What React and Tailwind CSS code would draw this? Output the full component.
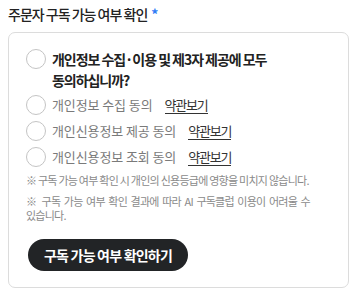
export default function App() {
  const font = { fontFamily: '"Noto Sans CJK KR", "Noto Sans", sans-serif' };
  const Circle = () => (
    <span className="block w-[20px] h-[20px] rounded-full border-[1.5px] border-[#c4c4c4] bg-white shrink-0" />
  );
  const items = ["개인정보 수집 동의", "개인신용정보 제공 동의", "개인신용정보 조회 동의"];
  return (
    <div className="w-[359px] h-[297px] bg-white relative overflow-hidden" style={font}>
      <div className="pl-[8px] pr-[10px] pt-[5px]">
        <div className="flex items-center h-[18px] text-[14px] font-medium text-[#222] tracking-[-1px]">
          주문자 구독 가능 여부 확인
          <span className="ml-[4px] text-[#2f7cf6] font-bold">*</span>
        </div>
        <div className="mt-[9px] border border-[#dcdcdc] rounded-[7px] px-[17px] pt-[16px] pb-[16px]">
          <div className="flex items-start gap-[6px]">
            <Circle />
            <div className="text-[14px] font-bold text-[#222] leading-[21px] tracking-[-1.05px]">
              개인정보 수집·이용 및 제3자 제공에 모두
              <br />
              동의하십니까?
            </div>
          </div>
          <div className="mt-[4px] flex flex-col gap-[6px]">
            {items.map((t, i) => (
              <div key={i} className="flex items-center gap-[6px] h-[20px]">
                <Circle />
                <span className="text-[13px] text-[#7a7a7a] tracking-[-0.1px]">{t}</span>
                <span className="ml-[6px] text-[13px] text-[#333] tracking-[-1.2px] border-b border-[#333] leading-[16px]">
                  약관보기
                </span>
              </div>
            ))}
          </div>
          <div className="mt-[6px] w-[284px] text-[11px] text-[#8a8a8a] tracking-[-0.75px] leading-[14px] text-justify break-keep">
            <p>※ 구독 가능 여부 확인 시 개인의 신용등급에 영향을 미치지 않습니다.</p>
            <p className="mt-[7px]">※ 구독 가능 여부 확인 결과에 따라 AI 구독클럽 이용이 어려울 수 있습니다.</p>
          </div>
          <button className="mt-[17px] ml-[2px] w-[160px] h-[32px] rounded-full bg-[#222426] text-white text-[14px] font-bold tracking-[-0.8px]">
            구독 가능 여부 확인하기
          </button>
        </div>
      </div>
    </div>
  );
}
